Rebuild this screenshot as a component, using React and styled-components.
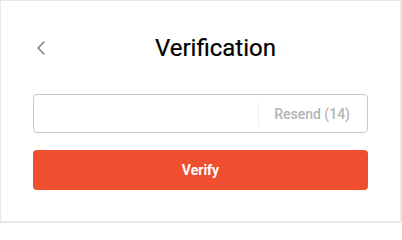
import React from "react"
import styled, { createGlobalStyle } from "styled-components"

const GlobalStyle = createGlobalStyle`
  html, body {
    margin: 0;
    padding: 0;
    background: #fff;
  }
  body {
    font-family: Roboto, "Liberation Sans", Arial, sans-serif;
  }
`

const Frame = styled.div`
  box-sizing: border-box;
  width: 402px;
  height: 223px;
  border-style: solid;
  border-color: #e8e8e8;
  border-width: 1px 2px 2px 1px;
  padding: 32px 32px 0 32px;
`

const Header = styled.div`
  display: flex;
  align-items: center;
  height: 30px;
`

const BackButton = styled.button`
  width: 30px;
  height: 30px;
  padding: 0 0 0 3px;
  border: 0;
  background: none;
  display: flex;
  align-items: center;
  justify-content: flex-start;
  cursor: pointer;
`

const Title = styled.h1`
  flex: 1;
  margin: 0;
  text-align: center;
  font-size: 24px;
  line-height: 30px;
  font-weight: 400;
  color: #000;
  -webkit-text-stroke: 0.2px #000;
`

const CodeField = styled.div`
  box-sizing: border-box;
  margin-top: 31px;
  height: 39px;
  border: 1px solid #c9c9c9;
  border-radius: 4px;
  display: flex;
  align-items: center;
`

const CodeInput = styled.input`
  flex: 1;
  min-width: 0;
  height: 100%;
  border: 0;
  background: transparent;
  padding: 0 12px;
  font: inherit;
  font-size: 14px;
  outline: none;
`

const Divider = styled.span`
  width: 1px;
  height: 24px;
  background: #ececec;
`

const ResendButton = styled.button`
  border: 0;
  background: none;
  padding: 0 17px 0 15px;
  font-family: inherit;
  font-size: 14px;
  font-weight: 500;
  color: #b4b4b4;
  cursor: default;
`

const VerifyButton = styled.button`
  box-sizing: border-box;
  display: block;
  width: 100%;
  height: 40px;
  margin-top: 17px;
  border: 0;
  border-radius: 4px;
  background: #ef4e2f;
  color: #fff;
  font-family: inherit;
  font-size: 14px;
  font-weight: 700;
  cursor: pointer;
`

const App = () => {
  return (
    <>
      <GlobalStyle />
      <Frame>
        <Header>
          <BackButton aria-label="Back">
            <svg width="10" height="14" viewBox="0 0 10 14" fill="none">
              <polyline
                points="8,1 2,7 8,13"
                stroke="#6b6b6b"
                strokeWidth="1.2"
                strokeLinecap="round"
                strokeLinejoin="round"
              />
            </svg>
          </BackButton>
          <Title>Verification</Title>
        </Header>
        <CodeField>
          <CodeInput type="text" />
          <Divider />
          <ResendButton disabled>Resend (14)</ResendButton>
        </CodeField>
        <VerifyButton>Verify</VerifyButton>
      </Frame>
    </>
  )
}

export default App
